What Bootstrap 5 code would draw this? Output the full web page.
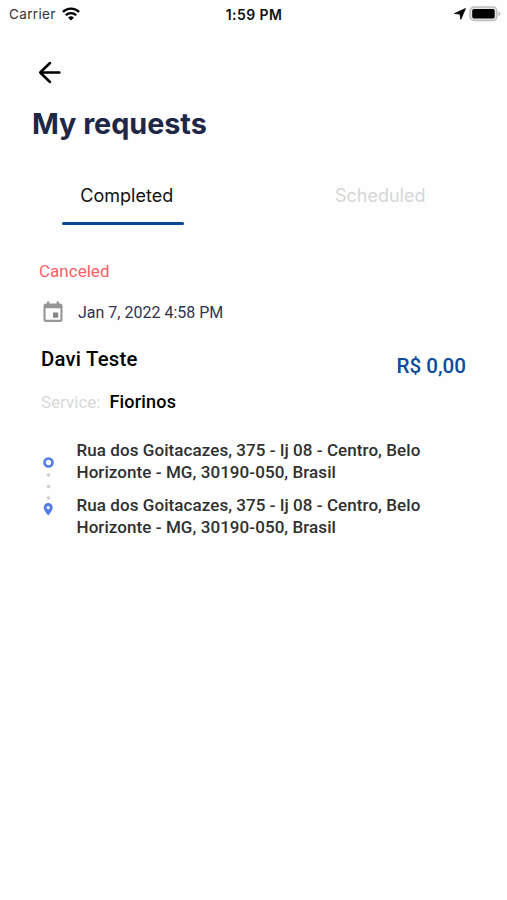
<!DOCTYPE html>
<html lang="en">
<head>
<meta charset="utf-8">
<meta name="viewport" content="width=device-width, initial-scale=1">
<title>My requests</title>
<link href="https://cdn.jsdelivr.net/npm/bootstrap@5.3.0/dist/css/bootstrap.min.css" rel="stylesheet">
<style>
body{background:#fefefe;font-family:Roboto,"Liberation Sans",sans-serif;color:#000;min-height:100vh;overflow:hidden}
svg{display:block;flex:none}
span,h1,h2,p{white-space:nowrap}
.status-bar{height:28px;font-family:Inter,sans-serif;font-size:13.5px;padding:0 6px 0 9px}
.status-bar>div{flex:1 1 0}
.carrier{color:#333;letter-spacing:.35px}
.clock{font-weight:600;font-size:14px;color:#111;letter-spacing:.45px;padding-right:2px}
.wifi{margin-left:-2px}
.battery{margin-left:3px}
.page-head{padding:32px 0 0 37px}
.page-title{font:700 28.8px/36px Inter,sans-serif;color:#1f2747;letter-spacing:-.05px;margin:20px 0 0 -5px}
.tabs{margin-top:36px;font:400 18px/36px Inter,sans-serif;letter-spacing:-.15px}
.tabs .tab-item{border:0;background:none;padding:0;color:#d6d6d6;height:47px}
.tabs .tab-item.current{color:#111}
.tab-line{width:122px;height:3px;border-radius:2px;background:#0b4793;margin:7.5px 8px 0 0}
.request{padding:34px 41px 0 39px}
.state{color:#fb5e66;font-size:17px;line-height:24px;letter-spacing:.02px}
.date{color:#30344f;font-size:16px;line-height:24px;margin-top:17px;gap:15px;padding-left:4px}
.date span{padding-top:1px;margin-bottom:-1px}
.summary{margin:22px 0 0 2px}
.client{font-weight:500;font-size:20.3px;line-height:26px;margin:0;letter-spacing:.25px}
.service{font-size:17px;line-height:24px;margin-top:18px;gap:9px}
.service .label-soft{color:#d9d9d9}
.service .kind{font-weight:500;font-size:18px;letter-spacing:.2px}
.price{font-weight:500;font-size:20.6px;line-height:26px;color:#0b4c9b;padding-top:7px}
.route{margin-top:25px;padding-left:4px;gap:22.5px}
.route p{font-weight:500;font-size:17px;line-height:22px;margin:0 0 11px;color:#303030;letter-spacing:.07px}
</style>
</head>
<body>
<header class="status-bar d-flex align-items-center">
  <div class="d-flex align-items-center gap-2"><span class="carrier">Carrier</span>
    <svg class="wifi" width="18" height="14" viewBox="0 0 18 14"><g fill="none" stroke="#000" stroke-width="2.3"><path d="M.9 5a11.5 11.5 0 0 1 16.2 0"/><path d="M3.8 8.3a7.4 7.4 0 0 1 10.4 0"/></g><path d="M9 13.6 6.1 10.7a4.1 4.1 0 0 1 5.800 0z"/></svg>
  </div>
  <span class="clock">1:59 PM</span>
  <div class="d-flex align-items-center justify-content-end">
    <svg width="12" height="12" viewBox="0 0 12 12"><path d="M11.500.5 6.800 11.400 6 6.100.5 5.500z" stroke="#000" stroke-width=".8" stroke-linejoin="round"/></svg>
    <svg class="battery" width="32" height="16" viewBox="0 0 32 16"><rect x="1" y="1" width="27" height="13.4" rx="4.2" fill="#e4e4e4" stroke="#bdbdbd" stroke-width="1.5"/><rect x="3.2" y="3" width="22.5" height="9.5" rx="1.7"/><path d="M29.5 5.5v4.600q2-.7 2-2.300t-2-2.300" fill="#bbb"/></svg>
  </div>
</header>
<main>
  <div class="page-head">
    <svg width="26" height="26" viewBox="0 0 26 26" fill="none" stroke="#000" stroke-width="2.5" stroke-linecap="round" stroke-linejoin="round"><path d="M22.400 12.500H3.200M13 3 3.200 12.500 13 22"/></svg>
    <h1 class="page-title">My requests</h1>
  </div>
  <nav class="tabs row g-0 text-center">
    <button class="tab-item current col-6 d-flex flex-column align-items-center"><span>Completed</span><div class="tab-line"></div></button>
    <button class="tab-item col-6 d-flex flex-column align-items-center"><span>Scheduled</span></button>
  </nav>
  <section class="request">
    <div class="state">Canceled</div>
    <div class="date d-flex align-items-center">
      <svg width="20" height="22" viewBox="0 0 20 22"><path fill="#969696" fill-rule="evenodd" d="M4 .5h2.4v2h7.200v-2H16v2h1q2.500 0 2.500 2.500v13.500q0 2.500-2.500 2.500H3Q.5 21 .5 18.500V5Q.5 2.500 3 2.500h1zM2.600 7.300v11.500h14.800V7.300z"/><path fill="#858585" d="M10 11.500h5.200v5.200H10z"/></svg>
      <span>Jan 7, 2022 4:58 PM</span>
    </div>
    <div class="summary d-flex justify-content-between">
      <div>
        <h2 class="client">Davi Teste</h2>
        <div class="service d-flex align-items-center"><span class="label-soft">Service:</span><span class="kind">Fiorinos</span></div>
      </div>
      <span class="price">R$ 0,00</span>
    </div>
    <div class="route d-flex">
      <svg width="11" height="80" viewBox="0 0 11 80"><circle cx="5.500" cy="23.500" r="4" fill="none" stroke="#527bea" stroke-width="2.600"/><g fill="#cfcfcf"><circle cx="5.500" cy="36" r="1.800"/><circle cx="5.500" cy="47.500" r="1.800"/><circle cx="5.500" cy="59" r="1.800"/></g><path fill="#527bea" fill-rule="evenodd" d="M5.200 64a4.500 4.500 0 0 1 4.500 4.500q0 3-4.500 8-4.500-5-4.500-8A4.500 4.500 0 0 1 5.200 64m0 2.900a1.700 1.700 0 1 0 0 3.400 1.700 1.700 0 0 0 0-3.400"/></svg>
      <div>
        <p>Rua dos Goitacazes, 375 - lj 08 - Centro, Belo<br>Horizonte - MG, 30190-050, Brasil</p>
        <p>Rua dos Goitacazes, 375 - lj 08 - Centro, Belo<br>Horizonte - MG, 30190-050, Brasil</p>
      </div>
    </div>
  </section>
</main>
<script src="https://cdn.jsdelivr.net/npm/bootstrap@5.3.0/dist/js/bootstrap.bundle.min.js"></script>
</body>
</html>
